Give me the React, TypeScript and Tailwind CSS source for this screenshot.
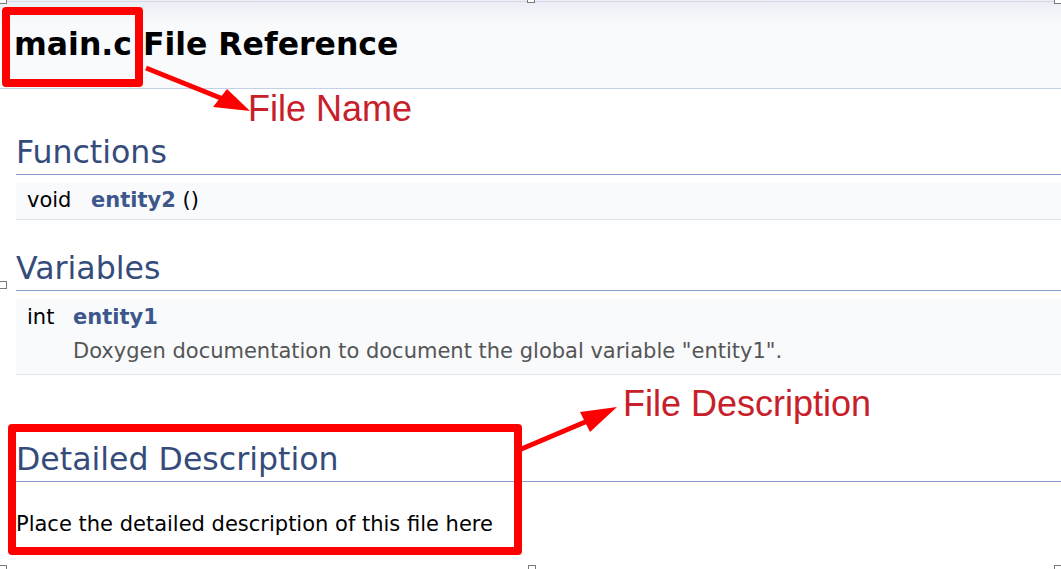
import React from "react";

const doc = { fontFamily: '"DejaVu Sans", "Noto Sans", sans-serif' };
const note = { fontFamily: '"Liberation Sans", Arial, sans-serif' };

function Handle({ className }: { className: string }) {
  return <div className={`absolute w-[8px] h-[8px] bg-white border border-[#7a7a7a] ${className}`} />;
}

function SectionTitle({ children, className }: { children: React.ReactNode; className: string }) {
  return (
    <h2 className={`text-[31.6px] leading-[36px] pb-[4px] border-b border-[#879ecb] text-[#354c7b] ${className}`}>
      {children}
    </h2>
  );
}

export default function App() {
  return (
    <div className="relative w-[1061px] h-[569px] overflow-hidden bg-white" style={doc}>
      {/* HEADER */}
      <div className="h-[89px] pt-[26px] pl-[14px] border-b border-[#c4cfe5] bg-[linear-gradient(to_bottom,#eaedf5_0px,#f9fafc_24px)]">
        <h1 className="text-[31.5px] leading-[36px] font-bold text-black">main.c File Reference</h1>
      </div>

      <div className="ml-[16px]">
        {/* FUNCTIONS */}
        <SectionTitle className="mt-[45px]">Functions</SectionTitle>
        <div className="mt-[8px] h-[37px] pl-[11px] flex items-center bg-[#f9fafc] border-b border-[#dee4f0] text-[21px] text-black">
          <span className="w-[64px]">void</span>
          <span className="font-bold text-[#3d578c]">entity2</span>
          <span>&nbsp;()</span>
        </div>

        {/* VARIABLES */}
        <SectionTitle className="mt-[30px]">Variables</SectionTitle>
        <div className="mt-[8px] h-[76px] pl-[11px] pt-[6px] bg-[#f9fafc] border-b border-[#dee4f0] text-[21px] leading-[24px]">
          <div className="flex">
            <span className="w-[46px] text-black">int</span>
            <span className="font-bold text-[#3d578c]">entity1</span>
          </div>
          <div className="pl-[46px] mt-[10px] text-[#555555]">Doxygen documentation to document the global variable "entity1".</div>
        </div>

        {/* DETAILED DESCRIPTION */}
        <SectionTitle className="mt-[66px]">Detailed Description</SectionTitle>
        <p className="mt-[30px] text-[21px] leading-[24px] text-black">Place the detailed description of this file here</p>
      </div>

      {/* SCREENSHOT FRAME */}
      <div className="absolute left-0 right-0 top-[1px] h-px bg-[#d6d9e6]" />
      <Handle className="left-[-1px] top-[-4px]" />
      <Handle className="left-[527px] top-[-5px]" />
      <Handle className="left-[1054px] top-[-4px]" />
      <Handle className="left-[-1px] top-[281px]" />
      <Handle className="left-[-1px] top-[565px]" />
      <Handle className="left-[528px] top-[565px]" />
      <Handle className="left-[1054px] top-[565px]" />

      {/* ANNOTATIONS */}
      <div className="absolute left-[2px] top-[7px] w-[141px] h-[80px] border-[8px] border-[#ff0000] rounded-[4px]" />
      <div className="absolute left-[8px] top-[424px] w-[514px] h-[131px] border-[8px] border-[#ff0000] rounded-[4px]" />
      <svg className="absolute inset-0 pointer-events-none" width="1061" height="569">
        <line x1="146" y1="68" x2="228" y2="101" stroke="#ff0000" strokeWidth="5" />
        <polygon points="250,111 213,107 227,89" fill="#ff0000" />
        <line x1="519" y1="450" x2="597" y2="417" stroke="#ff0000" strokeWidth="5" />
        <polygon points="617,407 580,412 590,432" fill="#ff0000" />
      </svg>
      <div className="absolute left-[248px] top-[89px] text-[36px] leading-[40px] text-[#c8202a]" style={note}>File Name</div>
      <div className="absolute left-[623px] top-[384px] text-[36px] leading-[40px] text-[#c8202a]" style={note}>File Description</div>
    </div>
  );
}
